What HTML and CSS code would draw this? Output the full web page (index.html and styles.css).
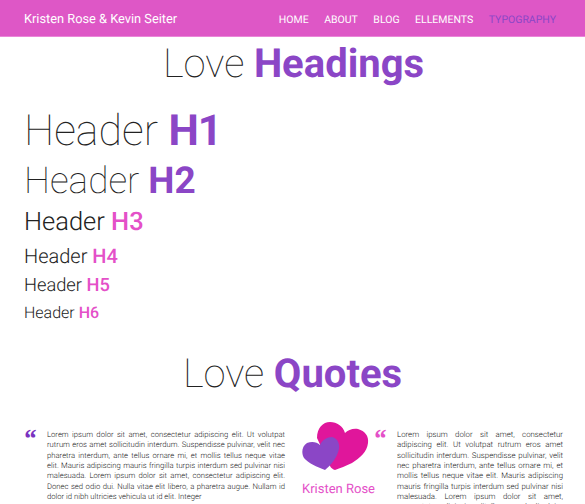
FILE: index.html
```html
<!DOCTYPE html>
<html>
	<head>
		<meta charset="utf-8">
		<title>Typography</title>
		<link rel="stylesheet" href="styles.css">
	</head>
	<body>
		<header class="topbar">
			<a class="brand">Kristen Rose &amp; Kevin Seiter</a>
			<nav class="menu">
				<a>HOME</a>
				<a>ABOUT</a>
				<a>BLOG</a>
				<a>ELLEMENTS</a>
				<a class="active">TYPOGRAPHY</a>
			</nav>
		</header>
		<h2 class="title title-top">Love <b>Headings</b></h2>
		<section class="headers">
			<h1>Header <b>H1</b></h1>
			<h2>Header <b>H2</b></h2>
			<h3>Header <b>H3</b></h3>
			<h4>Header <b>H4</b></h4>
			<h5>Header <b>H5</b></h5>
			<h6>Header <b>H6</b></h6>
		</section>
		<h2 class="title title-quotes">Love <b>Quotes</b></h2>
		<section class="quotes">
			<div class="quote quote-left">
				<span class="mark">&ldquo;</span>
				<p>Lorem ipsum dolor sit amet, consectetur adipiscing elit. Ut volutpat rutrum eros amet sollicitudin interdum. Suspendisse pulvinar, velit nec pharetra interdum, ante tellus ornare mi, et mollis tellus neque vitae elit. Mauris adipiscing mauris fringilla turpis interdum sed pulvinar nisi malesuada. Lorem ipsum dolor sit amet, consectetur adipiscing elit. Donec sed odio dui. Nulla vitae elit libero, a pharetra augue. Nullam id dolor id nibh ultricies vehicula ut id elit. Integer</p>
			</div>
			<div class="author">
				<svg class="hearts" width="67" height="49" viewBox="0 0 67 49">
					<path fill="#e0169b" d="M33 48 C31 47.500 29 46 28 44 L15 16 C15 6 21 0 28 0 C35 0 41 4 43 11 C46 8 51 6 56 7 C63 9 67 14 66 21 C65 30 58 36 50 41 C44 44 38 46 33 48 Z"/>
					<path fill="#8b46c6" d="M23 48 C15 45 6 41 2 36 C-1 31 0 24 5 21 C10 19 15 20 18 23 C20 18 25 15 30 15 C35 16 38 21 37 27 C35 36 29 43 23 48 Z"/>
				</svg>
				<div class="author-name">Kristen Rose</div>
			</div>
			<div class="quote quote-right">
				<span class="mark mark-pink">&ldquo;</span>
				<p>Lorem ipsum dolor sit amet, consectetur adipiscing elit. Ut volutpat rutrum eros amet sollicitudin interdum. Suspendisse pulvinar, velit nec pharetra interdum, ante tellus ornare mi, et mollis tellus neque vitae elit. Mauris adipiscing mauris fringilla turpis interdum sed pulvinar nisi malesuada. Lorem ipsum dolor sit amet, consectetur adipiscing elit. Donec sed odio dui.</p>
			</div>
		</section>
	</body>
</html>
```

FILE: styles.css
```css
html, body {
	height: 504px;
	overflow: hidden;
}
body {
	margin: 0;
	background: #fff;
	color: #222;
	font-family: Roboto, "Liberation Sans", sans-serif;
	text-rendering: geometricPrecision;
}
.topbar {
	display: flex;
	justify-content: space-between;
	align-items: center;
	height: 33px;
	padding: 3px 29px 0 24px;
	background: #de57c6;
	border-bottom: 1px solid #ea86d8;
}
.brand {
	color: #fff;
	font-size: 12.8px;
}
.menu {
	display: flex;
	gap: 15.500px;
	font-size: 10.5px;
	color: #fff;
}
.menu .active {
	color: #8b46c6;
}
.title {
	margin: 0;
	text-align: center;
	font-size: 40px;
	line-height: 48px;
	font-weight: 100;
	color: #222;
}
.title b {
	font-weight: 700;
	color: #8b46c6;
}
.title-top {
	padding: 3px 0 0 2px;
}
.title-quotes {
	margin-top: 27px;
}
.headers {
	padding: 17px 24px 0;
}
.headers h1, .headers h2, .headers h3, .headers h4, .headers h5, .headers h6 {
	margin: 0;
}
.headers h1 {
	font-size: 43px;
	line-height: 52px;
	font-weight: 100;
}
.headers h2 {
	font-size: 37px;
	line-height: 44px;
	margin-top: 3px;
	font-weight: 100;
}
.headers h3 {
	font-size: 25.5px;
	line-height: 30px;
	margin-top: 3px;
	font-weight: 300;
}
.headers h4 {
	font-size: 20px;
	line-height: 24px;
	margin-top: 7px;
	font-weight: 300;
}
.headers h5 {
	font-size: 18.3px;
	line-height: 22px;
	margin-top: 7px;
	font-weight: 300;
}
.headers h6 {
	font-size: 16px;
	line-height: 20px;
	margin-top: 6px;
	font-weight: 300;
}
.headers h1 b, .headers h2 b {
	font-weight: 700;
	color: #8b46c6;
}
.headers h1 b {
	letter-spacing: -1px;
}
.headers h3 b, .headers h4 b, .headers h5 b, .headers h6 b {
	font-weight: 500;
	color: #e450c8;
}
.quotes {
	display: flex;
	padding: 0 22px 0 24px;
	margin-top: 32px;
}
.quote {
	display: flex;
}
.quote-left {
	width: 261px;
}
.quote-right {
	width: 188px;
}
.quote p {
	margin: 0;
	font-size: 7.85px;
	line-height: 10.35px;
	font-weight: 300;
	text-align: justify;
	color: #222;
}
.quote-left p {
	font-size: 7.7px;
}
.mark {
	flex: none;
	width: 24px;
	margin-left: -1px;
	color: #7a32c0;
	font-family: "Liberation Serif", serif;
	font-style: italic;
	font-weight: 700;
	font-size: 26px;
	line-height: 18px;
}
.mark-pink {
	color: #e450c8;
	margin-left: -2px;
}
.author {
	width: 73px;
	margin-left: 17px;
	margin-top: -8px;
}
.hearts {
	display: block;
}
.author-name {
	margin-top: 11px;
	font-size: 13px;
	white-space: nowrap;
	color: #e450c8;
}
```
